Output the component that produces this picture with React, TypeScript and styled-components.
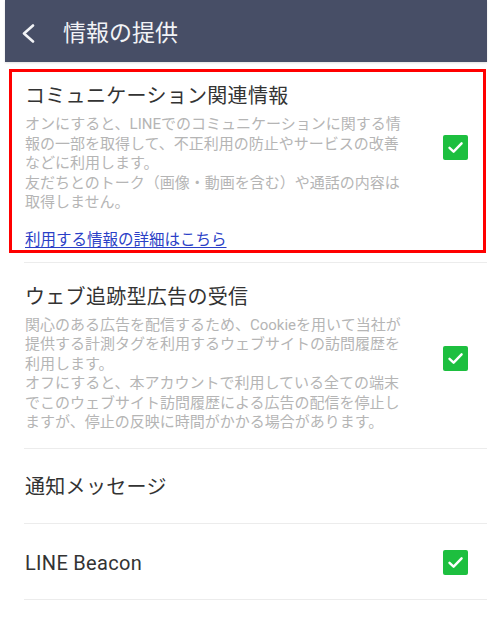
import React from "react";
import styled, { createGlobalStyle } from "styled-components";

const GlobalStyle = createGlobalStyle`
  html, body { margin: 0; padding: 0; background: #ffffff; }
  body {
    font-family: Roboto, "Noto Sans CJK JP", "Noto Sans", "Liberation Sans", sans-serif;
    -webkit-font-smoothing: antialiased;
  }
`;

const Page = styled.div`
  width: 492px;
  min-height: 622px;
  box-sizing: border-box;
  padding: 0 5px;
  background: #ffffff;
`;

const Header = styled.header`
  height: 62px;
  display: flex;
  align-items: center;
  padding-left: 15px;
  gap: 27px;
  background: #474e66;
  box-shadow: 0 1px 2px rgba(0, 0, 0, 0.12);
`;

const BackButton = styled.button`
  width: 16px;
  height: 22px;
  padding: 0;
  border: 0;
  background: none;
  display: flex;
  align-items: center;
  justify-content: center;
  margin-top: 5px;
`;

const HeaderTitle = styled.h1`
  margin: 0;
  font-family: "Noto Sans CJK JP", sans-serif;
  font-size: 23px;
  font-weight: 400;
  line-height: 30px;
  color: #f2f3f6;
`;

const Highlight = styled.div`
  margin: 7px 1px 9px 4px;
  border: 3px solid #ff0000;
  padding: 11px 15px 0 13px;
`;

const Row = styled.div`
  display: flex;
  align-items: center;
  justify-content: space-between;
`;

const Section = styled.div<{ $pt: number; $pb: number }>`
  margin-left: 19px;
  padding: ${(p) => p.$pt}px 19px ${(p) => p.$pb}px 1px;
  border-bottom: 1px solid #ececec;
`;

const Divider = styled.div`
  margin-left: 19px;
  height: 1px;
  background: #ececec;
`;

const TextBlock = styled.div`
  flex: 1;
  min-width: 0;
  padding-right: 20px;
`;

const Title = styled.div`
  font-size: 20px;
  line-height: 26px;
  color: #333333;
  letter-spacing: 0.3px;
`;

const Body = styled.p`
  margin: 6px 0 0;
  font-size: 15px;
  line-height: 19.5px;
  color: #b5b5b5;
  white-space: pre-line;
`;

const DetailLink = styled.a`
  display: inline-block;
  margin-top: 17px;
  font-size: 15.5px;
  line-height: 20px;
  color: #2b3fc7;
  text-decoration: underline;
  text-underline-offset: 2px;
`;

const CheckBox = styled.span`
  flex: none;
  width: 25px;
  height: 25px;
  border-radius: 2px;
  background: #1dbf3f;
  display: flex;
  align-items: center;
  justify-content: center;
`;

const Check = () => (
  <CheckBox>
    <svg width="17" height="17" viewBox="0 0 17 17" fill="none">
      <path
        d="M2.5 8.8 L6.6 12.7 L14.6 4.3"
        stroke="#ffffff"
        strokeWidth="2.4"
        strokeLinecap="round"
        strokeLinejoin="round"
      />
    </svg>
  </CheckBox>
);

export default function App() {
  return (
    <Page>
      <GlobalStyle />
      <Header>
        <BackButton aria-label="戻る">
          <svg width="13" height="19" viewBox="0 0 13 19" fill="none">
            <path
              d="M11 1.5 L2 9.5 L11 17.5"
              stroke="#f2f3f6"
              strokeWidth="2.6"
              strokeLinecap="round"
              strokeLinejoin="round"
            />
          </svg>
        </BackButton>
        <HeaderTitle>情報の提供</HeaderTitle>
      </Header>

      <Highlight>
        <Row>
          <TextBlock>
            <Title>コミュニケーション関連情報</Title>
            <Body>
              {"オンにすると、LINEでのコミュニケーションに関する情\n報の一部を取得して、不正利用の防止やサービスの改善\nなどに利用します。\n友だちとのトーク（画像・動画を含む）や通話の内容は\n取得しません。"}
            </Body>
          </TextBlock>
          <Check />
        </Row>
        <DetailLink href="#">利用する情報の詳細はこちら</DetailLink>
      </Highlight>
      <Divider />

      <Section $pt={21} $pb={15}>
        <Row>
          <TextBlock>
            <Title>ウェブ追跡型広告の受信</Title>
            <Body>
              {"関心のある広告を配信するため、Cookieを用いて当社が\n提供する計測タグを利用するウェブサイトの訪問履歴を\n利用します。\nオフにすると、本アカウントで利用している全ての端末\nでこのウェブサイト訪問履歴による広告の配信を停止し\nますが、停止の反映に時間がかかる場合があります。"}
            </Body>
          </TextBlock>
          <Check />
        </Row>
      </Section>

      <Section $pt={25} $pb={23}>
        <Row>
          <Title>通知メッセージ</Title>
        </Row>
      </Section>

      <Section $pt={26} $pb={23}>
        <Row>
          <Title>LINE Beacon</Title>
          <Check />
        </Row>
      </Section>
    </Page>
  );
}
